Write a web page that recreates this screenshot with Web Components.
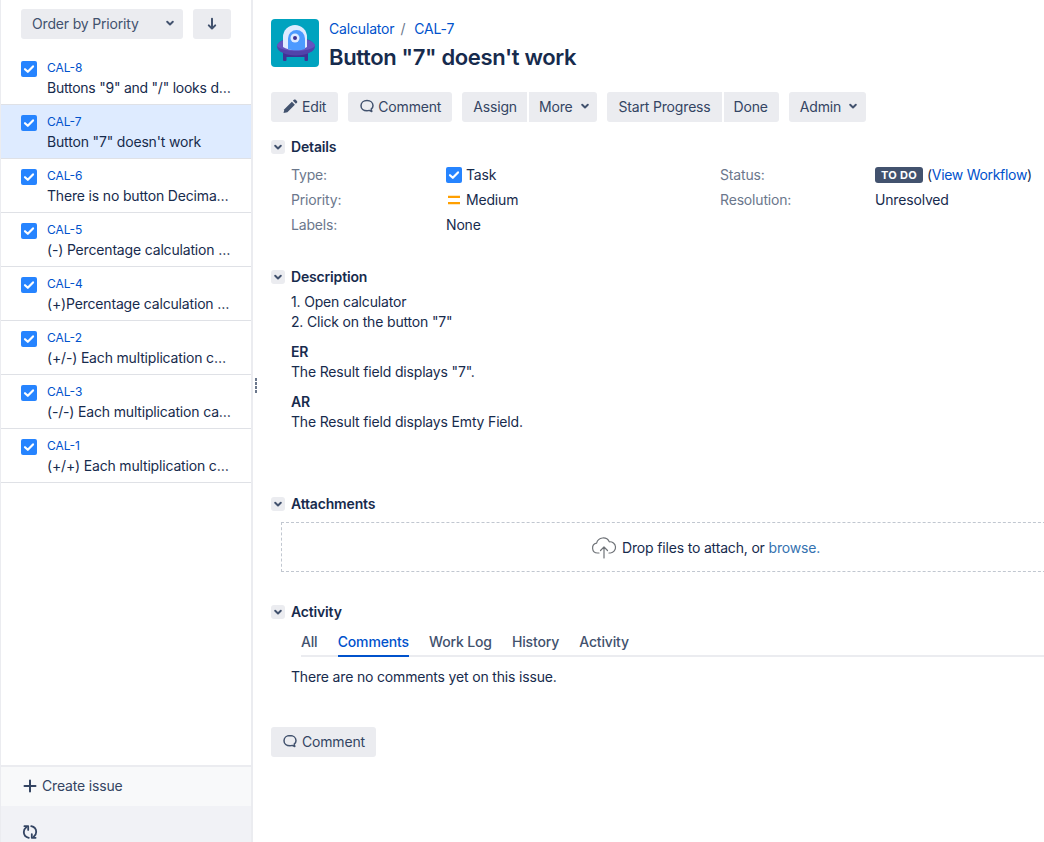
<!DOCTYPE html>
<html>
<head>
<meta charset="utf-8">
<title>CAL-7</title>
<style>
  html, body { margin: 0; height: 842px; overflow: hidden; background: #fff; }
  body { font-family: Inter, "Liberation Sans", sans-serif; font-size: 14px; color: #172b4d; letter-spacing: -0.17px; }
</style>
</head>
<body>
<x-app>
  <x-sidebar slot="side">
    <x-issue-item key="CAL-8" style="letter-spacing:-0.24px">Buttons "9" and "/" looks d…</x-issue-item>
    <x-issue-item key="CAL-7" selected>Button "7" doesn't work</x-issue-item>
    <x-issue-item key="CAL-6">There is no button Decimal point on the page</x-issue-item>
    <x-issue-item key="CAL-5">(-) Percentage calculation is not correct</x-issue-item>
    <x-issue-item key="CAL-4">(+)Percentage calculation is not correct</x-issue-item>
    <x-issue-item key="CAL-2">(+/-) Each multiplication calculation is wrong</x-issue-item>
    <x-issue-item key="CAL-3">(-/-) Each multiplication calculation is wrong</x-issue-item>
    <x-issue-item key="CAL-1">(+/+) Each multiplication calculation is wrong</x-issue-item>
  </x-sidebar>
  <x-issue-view slot="main"></x-issue-view>
</x-app>

<script>
const chevron = `<svg width="16" height="16" viewBox="0 0 16 16" fill="none" stroke="#42526e" stroke-width="2" stroke-linecap="round" stroke-linejoin="round"><path d="M5.2 6.8 8 9.4l2.8-2.6"/></svg>`;
const taskIcon = `<svg width="16" height="16" viewBox="0 0 16 16"><rect width="16" height="16" rx="2" fill="#2684ff"/><path d="M4 8.2l2.8 2.6L12 5.4" fill="none" stroke="#fff" stroke-width="2.2" stroke-linecap="round" stroke-linejoin="round"/></svg>`;
const commentIcon = `<svg width="16" height="16" viewBox="0 0 16 16" fill="none" stroke="#42526e" stroke-width="1.5" stroke-linecap="round" stroke-linejoin="round"><path d="M8 2.500c-3.500 0-6 2.300-6 5.200s2.500 5.100 6 5.100c.8 0 1.500-.1 2.200-.4l2.600 1.100-.6-2.400c1.100-.9 1.800-2.100 1.800-3.400 0-2.900-2.500-5.200-6-5.200z"/></svg>`;

class XApp extends HTMLElement {
  constructor() {
    super();
    this.attachShadow({ mode: "open" }).innerHTML = `
      <style>
        :host { display: flex; height: 842px; width: 1044px; overflow: hidden; }
        .side { flex: 0 0 253px; width: 253px; min-width: 0; display: flex; }
        .main { flex: 1; min-width: 0; }
      </style>
      <div class="side"><slot name="side"></slot></div>
      <div class="main"><slot name="main"></slot></div>
    `;
  }
}

class XSidebar extends HTMLElement {
  constructor() {
    super();
    this.attachShadow({ mode: "open" }).innerHTML = `
      <style>
        :host {
          display: flex; flex-direction: column; width: 253px; box-sizing: border-box;
          border-left: 1px solid #ebecf0; border-right: 2px solid #ebecf0;
          position: relative;
        }
        .sort { display: flex; gap: 10px; padding: 9px 20px 12px 20px; height: 30px; }
        .select, .dir {
          background: #ebecf0; border-radius: 3px; height: 30px; display: flex;
          align-items: center; color: #42526e; box-sizing: border-box;
        }
        .select { width: 162px; padding: 0 5px 2px 11px; justify-content: space-between; }
        .dir { width: 38px; justify-content: center; }
        .list { flex: 1; min-width: 0; }
        .create {
          border-top: 2px solid #ebecf0; background: #f8f9fa; height: 41px; box-sizing: border-box;
          display: flex; align-items: center; gap: 5px; padding: 0 0 2px 22px; color: #344563;
        }
        .refresh { background: #f1f2f6; height: 36px; padding: 18px 0 0 21px; box-sizing: border-box; }
        svg { display: block; }
        .grip {
          position: absolute; right: -6px; top: 378px; display: grid; gap: 1px;
        }
        .grip i { display: block; width: 2px; height: 3px; background: #6b778c; }
      </style>
      <div class="sort">
        <div class="select"><span>Order by Priority</span>${chevron}</div>
        <div class="dir">
          <svg width="16" height="16" viewBox="0 0 16 16" fill="none" stroke="#42526e" stroke-width="2" stroke-linecap="round" stroke-linejoin="round"><path d="M8 2.800v9.600M4.800 9.400 8 12.600l3.200-3.200"/></svg>
        </div>
      </div>
      <div class="list"><slot></slot></div>
      <div class="create">
        <svg width="14" height="14" viewBox="0 0 14 14" fill="none" stroke="#344563" stroke-width="2" stroke-linecap="round"><path d="M7 1.500v11M1.500 7h11"/></svg>
        <span>Create issue</span>
      </div>
      <div class="refresh">
        <svg width="16" height="16" viewBox="0 0 16 16" fill="none" stroke="#344563" stroke-width="1.800" stroke-linecap="round" stroke-linejoin="round">
          <g><path d="M6.800 13.800C3.900 13.200 1.800 10.900 1.800 8c0-1.900.9-3.500 2.500-4.700"/><path d="M2.400 2.200h3.800v3.700"/></g>
          <g transform="rotate(180 8 8)"><path d="M6.800 13.800C3.900 13.200 1.800 10.900 1.800 8c0-1.900.9-3.500 2.500-4.700"/><path d="M2.400 2.200h3.800v3.700"/></g>
        </svg>
      </div>
      <div class="grip"><i></i><i></i><i></i><i></i></div>
    `;
  }
}

class XIssueItem extends HTMLElement {
  constructor() {
    super();
    this.attachShadow({ mode: "open" }).innerHTML = `
      <style>
        :host {
          display: flex; height: 54px; box-sizing: border-box; gap: 10px;
          padding: 9px 20px 0 20px; border-bottom: 1px solid #dfe1e6;
          background: #fff;
        }
        :host([selected]) { background: #deebff; }
        .icon { flex: 0 0 16px; margin-top: 1px; }
        svg { display: block; }
        .text { min-width: 0; flex: 1; }
        .key { font-size: 12px; line-height: 16px; color: #0052cc; letter-spacing: 0; }
        .summary {
          line-height: 20px; margin-top: 2px; color: #172b4d;
          white-space: nowrap; overflow: hidden; text-overflow: ellipsis;
        }
      </style>
      <div class="icon">${taskIcon}</div>
      <div class="text">
        <div class="key"></div>
        <div class="summary"><slot></slot></div>
      </div>
    `;
  }
  connectedCallback() {
    this.shadowRoot.querySelector(".key").textContent = this.getAttribute("key");
  }
}

class XBtn extends HTMLElement {
  constructor() {
    super();
    this.attachShadow({ mode: "open" }).innerHTML = `
      <style>
        :host {
          display: inline-flex; align-items: center; height: 30px; box-sizing: border-box;
          background: #ebecf0; border-radius: 3px; padding: 0 var(--pr, 11px) 2px var(--pl, 11px); gap: var(--gap, 4px);
          color: #344563; white-space: nowrap; flex: none;
        }
        :host([group=first]) { border-radius: 3px 0 0 3px; }
        :host([group=last]) { border-radius: 0 3px 3px 0; }
        ::slotted(svg) { display: block; flex: none; }
      </style>
      <slot></slot>
    `;
  }
}

class XSection extends HTMLElement {
  constructor() {
    super();
    this.attachShadow({ mode: "open" }).innerHTML = `
      <style>
        :host { display: block; }
        .head { display: flex; align-items: center; gap: 6px; height: 20px; }
        .toggle {
          width: 14px; height: 14px; background: #ebecf0; border-radius: 3px;
          display: flex; align-items: center; justify-content: center; overflow: hidden;
        }
        .toggle svg { flex: none; }
        h2 { margin: 0; font-size: 14px; font-weight: 600; color: #172b4d; line-height: 20px; }
        .body { padding-left: 20px; }
      </style>
      <div class="head"><span class="toggle">${chevron}</span><h2></h2></div>
      <div class="body"><slot></slot></div>
    `;
  }
  connectedCallback() {
    this.shadowRoot.querySelector("h2").textContent = this.getAttribute("title");
  }
}

class XField extends HTMLElement {
  constructor() {
    super();
    this.attachShadow({ mode: "open" }).innerHTML = `
      <style>
        :host { display: grid; grid-template-columns: 155px 1fr; height: 25px; align-items: center; line-height: 20px; }
        .label { color: #6b778c; }
        .value { display: flex; align-items: center; gap: 4px; color: #172b4d; white-space: nowrap; }
      </style>
      <div class="label"></div>
      <div class="value"><slot></slot></div>
    `;
  }
  connectedCallback() {
    this.shadowRoot.querySelector(".label").textContent = this.getAttribute("label");
  }
}

class XIssueView extends HTMLElement {
  constructor() {
    super();
    this.attachShadow({ mode: "open" }).innerHTML = `
      <style>
        :host { display: block; padding: 19px 0 0 18px; overflow: hidden; }
        a { color: #0052cc; text-decoration: none; }
        .top { display: flex; gap: 10px; height: 48px; }
        .avatar { display: block; width: 48px; height: 48px; flex: none; }
        .crumbs { font-size: 14px; line-height: 20px; color: #6b778c; display: flex; }
        .crumbs span { margin: 0 9px 0 6px; }
        h1 { margin: 4px 0 0; font-size: 22px; line-height: 28px; font-weight: 600; color: #172b4d; letter-spacing: -0.35px; white-space: nowrap; }
        .toolbar { display: flex; margin-top: 25px; gap: 10px; }
        .group { display: flex; gap: 2px; }
        .sections { margin-top: 15px; }
        .fields { display: grid; grid-template-columns: 429px 1fr; margin-top: 5px; }
        .todo {
          background: #42526e; color: #fff; font-size: 11px; font-weight: 700; border-radius: 3px;
          padding: 0 6px; line-height: 16px; letter-spacing: 0.3px; white-space: nowrap;
        }
        .flow { letter-spacing: -0.3px; }
        .pri { display: block; width: 16px; height: 16px; }
        .desc { margin-top: 5px; line-height: 20px; }
        .desc p { margin: 0 0 10px; }
        .desc b { font-weight: 600; }
        .drop {
          margin: 8px 0 0 -10px; height: 50px; box-sizing: border-box; width: 780px;
          border: 1px dashed #c1c7d0; display: flex; align-items: center;
          gap: 5px; padding-left: 309px; color: #172b4d;
        }
        .drop a { color: #3572b0; }
        .tabs {
          display: flex; gap: 20.25px; margin: 10px 0 0 10px; height: 23px; width: 800px;
          border-bottom: 2px solid #ebecf0; color: #42526e; font-weight: 500;
        }
        .tabs div { line-height: 20px; height: 23px; }
        .tabs .on { color: #0052cc; border-bottom: 2px solid #0052cc; }
        .none { margin-top: 10px; line-height: 20px; color: #172b4d; }
        .bottom { margin-top: 40px; }
      </style>
      <div class="top">
        <svg class="avatar" viewBox="0 0 48 48">
          <rect width="48" height="48" rx="4" fill="#00a3bf"/>
          <rect x="12" y="33" width="3.500" height="9" rx="1" fill="#403294"/>
          <rect x="33.500" y="33" width="3.500" height="9" rx="1" fill="#403294"/>
          <rect x="13" y="34" width="23" height="4" fill="#403294"/>
          <ellipse cx="25" cy="27.500" rx="19" ry="9" fill="#5243aa"/>
          <path d="M6 27c0-4 8-7.500 19-7.500s19 3.500 19 7.500c-3 3.500-11 5-19 5S9 30.500 6 27z" fill="#6554c0"/>
          <path d="M12 28V18a12 12 0 0 1 24 0v10c-3 2-7 3-12 3s-9-1-12-3z" fill="#deebff"/>
          <path d="M17 30V19.500a8.500 8.500 0 0 1 17 0V30c-2.500 1-5 1.300-8.500 1.300S19.500 31 17 30z" fill="#4c9aff"/>
          <circle cx="24" cy="19" r="4.500" fill="#deebff"/>
          <circle cx="24" cy="19" r="2" fill="#403294"/>
        </svg>
        <div>
          <div class="crumbs"><a>Calculator</a><span>/</span><a>CAL-7</a></div>
          <h1>Button "7" doesn't work</h1>
        </div>
      </div>
      <div class="toolbar">
        <x-btn style="--pr:12px"><svg width="16" height="16" viewBox="0 0 16 16" fill="#42526e"><path d="M1.500 15l.9-3.700 7.500-7.500 3 3-7.500 7.500z"/><path d="M10.900 2.800l1-1c.5-.5 1.300-.5 1.800 0l1.200 1.200c.5.5.5 1.300 0 1.800l-1 1z"/></svg>Edit</x-btn>
        <x-btn style="--gap:3px">${commentIcon}Comment</x-btn>
        <div class="group">
          <x-btn group="first" style="--pr:10px">Assign</x-btn>
          <x-btn group="last" style="--pl:10px;--pr:4px">More${chevron}</x-btn>
        </div>
        <div class="group">
          <x-btn group="first" style="--pl:12px">Start Progress</x-btn>
          <x-btn group="last" style="--pl:10px">Done</x-btn>
        </div>
        <x-btn style="--pr:5px">Admin${chevron}</x-btn>
      </div>
      <div class="sections">
        <x-section title="Details">
          <div class="fields">
            <div>
              <x-field label="Type:">${taskIcon}Task</x-field>
              <x-field label="Priority:"><svg class="pri" width="16" height="16" viewBox="0 0 16 16"><path d="M2 3.700h12V6H2zM2 10h12v2.300H2z" fill="#ff9f00"/></svg>Medium</x-field>
              <x-field label="Labels:">None</x-field>
            </div>
            <div>
              <x-field label="Status:"><span class="todo">TO DO</span><span class="flow">(<a>View Workflow</a>)</span></x-field>
              <x-field label="Resolution:">Unresolved</x-field>
            </div>
          </div>
        </x-section>
        <x-section title="Description" style="margin-top:30px">
          <div class="desc">
            <p>1. Open calculator<br>2. Click on the button "7"</p>
            <p><b>ER</b><br>The Result field displays "7".</p>
            <p><b>AR</b><br>The Result field displays Emty Field.</p>
          </div>
        </x-section>
        <x-section title="Attachments" style="margin-top:62px">
          <div class="drop">
            <svg width="26" height="24" viewBox="0 0 26 24" fill="none" stroke="#6f7378" stroke-width="1.200" stroke-linecap="round" stroke-linejoin="round"><path d="M8 18H6.500A5 5 0 0 1 5.600 8.100 6.800 6.800 0 0 1 18.300 6.800a5.600 5.600 0 0 1 1.200 11.200H18"/><path d="M13 23V12M9.500 15.500 13 12l3.500 3.500"/></svg>
            <span>Drop files to attach, or <a>browse.</a></span>
          </div>
        </x-section>
        <x-section title="Activity" style="margin-top:30px">
          <div class="tabs">
            <div>All</div><div class="on">Comments</div><div>Work Log</div><div>History</div><div>Activity</div>
          </div>
          <div class="none">There are no comments yet on this issue.</div>
        </x-section>
      </div>
      <div class="bottom"><x-btn>${commentIcon}Comment</x-btn></div>
    `;
  }
}

customElements.define("x-app", XApp);
customElements.define("x-sidebar", XSidebar);
customElements.define("x-issue-item", XIssueItem);
customElements.define("x-btn", XBtn);
customElements.define("x-section", XSection);
customElements.define("x-field", XField);
customElements.define("x-issue-view", XIssueView);
</script>
</body>
</html>
